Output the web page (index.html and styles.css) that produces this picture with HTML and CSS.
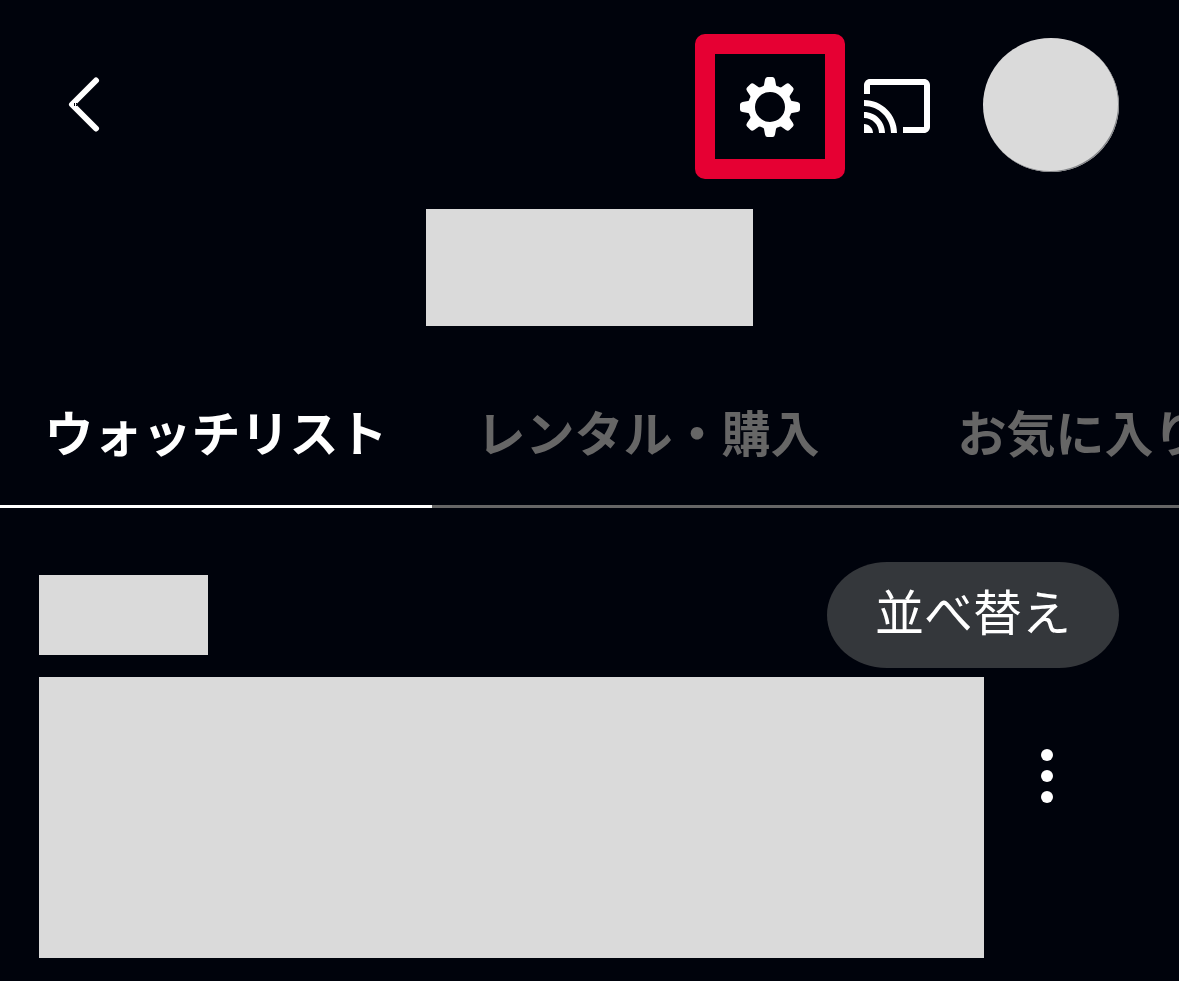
FILE: index.html
```html
<!DOCTYPE html>
<html lang="ja">
<head>
    <meta charset="UTF-8">
    <meta name="viewport" content="width=device-width, initial-scale=1">
    <title>ウォッチリスト</title>
    <link rel="stylesheet" href="styles.css">
</head>
<body>
    <header class="header">
        <button class="icon-btn" type="button" aria-label="戻る">
            <svg width="33" height="55" viewBox="0 0 33 55">
                <path d="M29 3.500L5 27.500L29 51.500" fill="none" stroke="#fff" stroke-width="6" stroke-linecap="round" stroke-linejoin="round"/>
                <path d="M7.500 26v3M9.500 26v1M9.500 28v1" fill="none" stroke="#00030c" stroke-width="1"/>
            </svg>
        </button>
        <div class="actions">
            <button class="icon-btn highlight" type="button" aria-label="設定">
                <svg width="60" height="60" viewBox="-30 -30 60 60" fill="#fff">
                    <defs>
                        <path id="tooth" d="M-7.500-19L-6-22L-5-27.500Q-4.500-30-2.500-30H2.500Q4.500-30 5-27.500L6-22L7.500-19Z"/>
                    </defs>
                    <circle r="18.500" fill="none" stroke="#fff" stroke-width="7"/>
                    <use href="#tooth"/>
                    <use href="#tooth" transform="rotate(45)"/>
                    <use href="#tooth" transform="rotate(90)"/>
                    <use href="#tooth" transform="rotate(135)"/>
                    <use href="#tooth" transform="rotate(180)"/>
                    <use href="#tooth" transform="rotate(225)"/>
                    <use href="#tooth" transform="rotate(270)"/>
                    <use href="#tooth" transform="rotate(315)"/>
                </svg>
            </button>
            <button class="icon-btn cast" type="button" aria-label="キャスト">
                <svg width="66" height="54" viewBox="1 3 22 18" fill="#fff">
                    <path d="M21 3H3c-1.100 0-2 .9-2 2v3h2V5h18v14h-7v2h7c1.100 0 2-.9 2-2V5c0-1.100-.9-2-2-2zM1 18v3h3c0-1.660-1.340-3-3-3zm0-4v2c2.760 0 5 2.240 5 5h2c0-3.870-3.130-7-7-7zm0-4v2c4.970 0 9 4.030 9 9h2c0-6.080-4.930-11-11-11z"/>
                </svg>
            </button>
            <button class="icon-btn avatar" type="button" aria-label="プロフィール"></button>
        </div>
    </header>

    <div class="profile-name"></div>

    <nav class="tabs">
        <a class="tab active" href="#watchlist">ウォッチリスト</a>
        <a class="tab" href="#rental">レンタル・購入</a>
        <a class="tab" href="#favorites">お気に入り</a>
    </nav>

    <main class="list" id="watchlist">
        <div class="toolbar">
            <div class="count"></div>
            <button class="sort" type="button">並べ替え</button>
        </div>
        <div class="item">
            <div class="thumb"></div>
            <button class="icon-btn more" type="button" aria-label="その他">
                <svg width="12" height="54" viewBox="0 0 12 54" fill="#fff">
                    <circle cx="6" cy="6" r="6"/>
                    <circle cx="6" cy="27" r="6"/>
                    <circle cx="6" cy="48" r="6"/>
                </svg>
            </button>
        </div>
    </main>
</body>
</html>
```
FILE: styles.css
```css
* {
    box-sizing: border-box;
}

body {
    margin: 0;
    background-color: #00030c;
    color: #fff;
    font-family: "Noto Sans CJK JP", sans-serif;
    overflow: hidden;
}

.icon-btn {
    display: block;
    padding: 0;
    border: none;
    background: transparent;
    cursor: pointer;
}

.icon-btn svg {
    display: block;
}

.header {
    display: flex;
    justify-content: space-between;
    align-items: flex-start;
    padding: 34px 60px 0 67px;
}

.header > .icon-btn {
    padding: 43px 0;
}

.actions {
    display: flex;
    align-items: flex-start;
}

.highlight {
    display: flex;
    align-items: center;
    justify-content: center;
    width: 150px;
    height: 145px;
    border: 20px solid #e60033;
    border-radius: 10px;
}

.cast {
    margin: 45px 0 0 19px;
}

.avatar {
    width: 136px;
    height: 134px;
    margin: 4px 0 0 53px;
    border-radius: 50%;
    background-color: #dadada;
    box-shadow: inset -1px -1px 0 #85878a;
}

.profile-name {
    width: 327px;
    height: 117px;
    margin: 30px auto 34px;
    background-color: #dadada;
}

.tabs {
    display: flex;
    overflow: hidden;
}

.tab {
    flex: 0 0 auto;
    min-width: 432px;
    padding: 34px 44px 38px;
    border-bottom: 3px solid #666;
    color: #666;
    font-size: 49px;
    font-weight: 700;
    line-height: 73px;
    text-align: center;
    text-decoration: none;
    white-space: nowrap;
}

.tab.active {
    color: #fff;
    border-bottom-color: #fff;
}

.list {
    padding: 54px 60px 23px 39px;
}

.toolbar {
    display: flex;
    justify-content: space-between;
    align-items: center;
}

.count {
    width: 169px;
    height: 80px;
    background-color: #dadada;
}

.sort {
    height: 106px;
    padding: 0 48px 10px;
    border: none;
    border-radius: 60px / 53px;
    background-color: #34373b;
    color: #fff;
    font-family: inherit;
    font-size: 49px;
    line-height: 72px;
    cursor: pointer;
}

.item {
    display: flex;
    align-items: flex-start;
    margin-top: 9px;
}

.thumb {
    flex: 1;
    height: 281px;
    background-color: #dadada;
}

.more {
    margin: 72px 66px 0 57px;
}
```
